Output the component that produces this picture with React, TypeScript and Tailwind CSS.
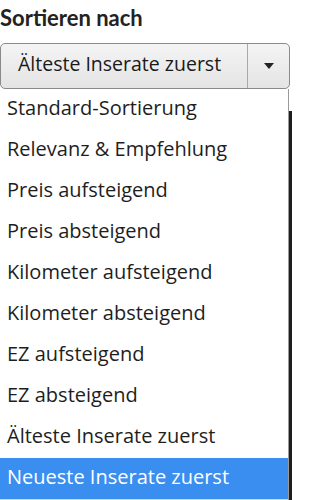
import React from "react";

const items = [
  "Standard-Sortierung",
  "Relevanz & Empfehlung",
  "Preis aufsteigend",
  "Preis absteigend",
  "Kilometer aufsteigend",
  "Kilometer absteigend",
  "EZ aufsteigend",
  "EZ absteigend",
  "Älteste Inserate zuerst",
  "Neueste Inserate zuerst",
];

export default function App() {
  return (
    <div className="w-[292px] h-[500px] bg-white overflow-hidden flex flex-col" style={{ fontFamily: '"Open Sans", "Noto Sans", sans-serif' }}>
      <div className="h-[43px] pt-[4px] text-[22px] font-bold text-[#222] leading-[28px]" style={{ fontFamily: 'Lato, "Open Sans", sans-serif' }}>
        Sortieren nach
      </div>
      <div className="w-[290px] h-[46px] border border-[#8a8a8a] rounded-[5px] bg-gradient-to-b from-[#f4f4f4] to-[#e4e4e4] flex items-stretch">
        <div className="flex-1 flex items-center pl-[17px] pb-[4px] text-[19.5px] text-[#1a1a1a] border-r border-[#a8a8a8]">
          Älteste Inserate zuerst
        </div>
        <div className="w-[41px] flex items-center justify-center">
          <svg width="10" height="6" viewBox="0 0 10 6">
            <path d="M0 0 L10 0 L5 6 Z" fill="#222" />
          </svg>
        </div>
      </div>
      <div className="flex flex-1">
        <div className="w-[289px] border-r border-[#9a9a9a] flex flex-col bg-white">
          {items.map((t, i) => (
            <div
              key={t}
              className={
                i === items.length - 1
                  ? "h-[41px] flex items-center pl-[7px] pb-[4px] text-[20px] bg-[#3a8ef0] text-white"
                  : "h-[41px] flex items-center pl-[7px] pb-[4px] text-[20px] text-[#1e1e1e]"
              }
            >
              {t}
            </div>
          ))}
          <div className="flex-1 bg-[#d8d8d8]" />
        </div>
        <div className="flex-1 flex flex-col">
          <div className="h-[22px] bg-white" />
          <div className="flex-1 bg-[#1e1e1e]" />
        </div>
      </div>
    </div>
  );
}
